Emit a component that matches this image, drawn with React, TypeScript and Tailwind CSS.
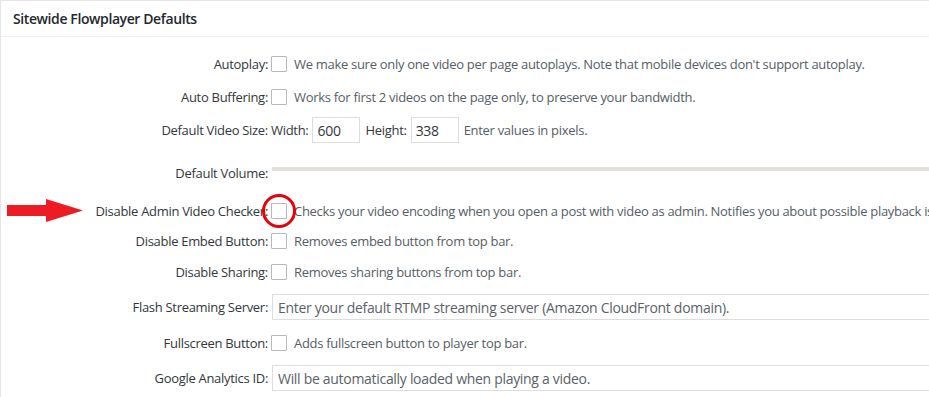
import React from 'react';

const FONT = { fontFamily: '"Open Sans", "Noto Sans", Arial, sans-serif' };

function Checkbox({ circled = false }: { circled?: boolean }) {
  return (
    <span className="relative inline-block h-[16px] w-[16px] shrink-0">
      <input
        type="checkbox"
        className="block h-[16px] w-[16px] appearance-none rounded-[1px] border border-[#b4b9be] bg-white"
      />
      {circled && (
        <span className="pointer-events-none absolute -left-[9px] -top-[9px] h-[34px] w-[34px] rounded-full border-[3px] border-[#e8000b]" />
      )}
    </span>
  );
}

function Row({
  label,
  height,
  children,
}: {
  label: string;
  height: string;
  children: React.ReactNode;
}) {
  return (
    <div className={`flex items-center ${height}`}>
      <div className="w-[267px] shrink-0 whitespace-nowrap text-right text-[#32373c]">{label}</div>
      <div className="ml-[3px] flex min-w-0 flex-1 items-center whitespace-nowrap">{children}</div>
    </div>
  );
}

function CheckRow({
  label,
  text,
  height,
  circled,
}: {
  label: string;
  text: string;
  height: string;
  circled?: boolean;
}) {
  return (
    <Row label={label} height={height}>
      <Checkbox circled={circled} />
      <span className="ml-[7px] text-[#555d66]">{text}</span>
    </Row>
  );
}

export default function App() {
  return (
    <div
      className="relative h-[397px] w-[929px] overflow-hidden bg-white text-[13px] leading-[18px] tracking-[-0.3px]"
      style={FONT}
    >
      <div className="border-l border-t border-[#e5e5e5]">
        <h2 className="flex h-[36px] items-center border-b border-[#eeeeee] pl-[12px] text-[14px] font-semibold tracking-[-0.4px] text-[#23282d]">
          Sitewide Flowplayer Defaults
        </h2>

        <div className="pt-[10px]">
          <CheckRow
            label="Autoplay:"
            height="h-[33px]"
            text="We make sure only one video per page autoplays. Note that mobile devices don't support autoplay."
          />
          <CheckRow
            label="Auto Buffering:"
            height="h-[33px]"
            text="Works for first 2 videos on the page only, to preserve your bandwidth."
          />
          <Row label="Default Video Size:" height="h-[34px]">
            <span className="text-[#32373c]">Width:</span>
            <input
              defaultValue="600"
              className="ml-[4px] h-[26px] w-[48px] border border-[#dddddd] px-[4px] text-[14px] text-[#32373c] outline-none"
            />
            <span className="ml-[5px] text-[#32373c]">Height:</span>
            <input
              defaultValue="338"
              className="ml-[4px] h-[26px] w-[48px] border border-[#dddddd] px-[4px] text-[14px] text-[#32373c] outline-none"
            />
            <span className="ml-[5px] text-[#555d66]">Enter values in pixels.</span>
          </Row>
          <Row label="Default Volume:" height="h-[52px]">
            <div className="mb-[8px] ml-[1px] h-[4px] w-[700px] shrink-0 bg-[#e4e0dc]" />
          </Row>
          <CheckRow
            label="Disable Admin Video Checker:"
            height="h-[24px]"
            circled
            text="Checks your video encoding when you open a post with video as admin. Notifies you about possible playback issues."
          />
          <CheckRow
            label="Disable Embed Button:"
            height="h-[36px]"
            text="Removes embed button from top bar."
          />
          <CheckRow
            label="Disable Sharing:"
            height="h-[26px]"
            text="Removes sharing buttons from top bar."
          />
          <Row label="Flash Streaming Server:" height="h-[44px]">
            <input
              placeholder="Enter your default RTMP streaming server (Amazon CloudFront domain)."
              className="ml-[1px] h-[26px] w-[700px] shrink-0 border border-[#dddddd] px-[5px] text-[14px] text-[#32373c] outline-none placeholder:text-[#5b6168]"
            />
          </Row>
          <CheckRow
            label="Fullscreen Button:"
            height="h-[28px]"
            text="Adds fullscreen button to player top bar."
          />
          <Row label="Google Analytics ID:" height="h-[42px]">
            <input
              placeholder="Will be automatically loaded when playing a video."
              className="ml-[1px] h-[26px] w-[700px] shrink-0 border border-[#dddddd] px-[5px] text-[14px] text-[#32373c] outline-none placeholder:text-[#5b6168]"
            />
          </Row>
        </div>
      </div>

      {/* red annotation arrow */}
      <svg
        className="pointer-events-none absolute left-[6px] top-[199px]"
        width="79"
        height="24"
        viewBox="0 0 79 24"
      >
        <rect x="1" y="6" width="42" height="11" fill="#ed1c24" />
        <polygon points="40,0 77,11.5 40,23" fill="#ed1c24" />
      </svg>
    </div>
  );
}
